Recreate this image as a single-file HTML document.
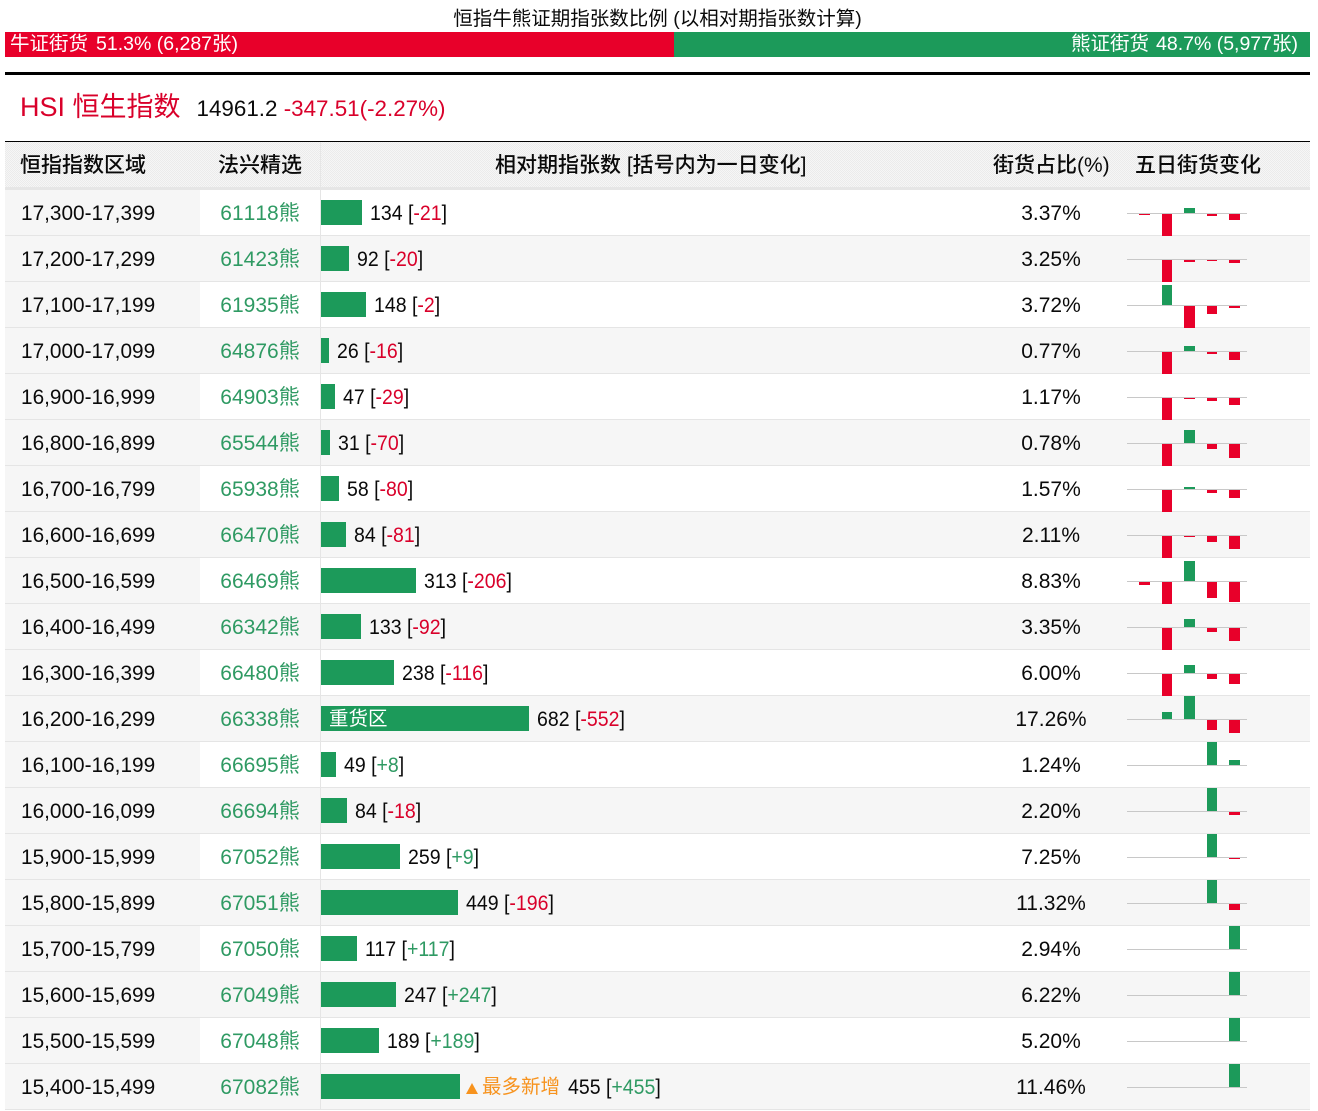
<!DOCTYPE html>
<html lang="zh"><head><meta charset="utf-8"><title>恒指牛熊证</title>
<style>
*{box-sizing:border-box}
html,body{margin:0;padding:0;background:#fff}
body{width:1318px;height:1111px;position:relative;overflow:hidden;font-family:"Liberation Sans","Noto Sans CJK SC",sans-serif;color:#0a0a0a}
.t{position:absolute;left:5px;width:1305px;top:8px;text-align:center;font-size:19.5px;line-height:22px;white-space:nowrap}
.bull,.bear{position:absolute;top:32px;height:25px;color:#fff;font-size:19.5px;line-height:24px;white-space:nowrap}
.bull{left:5px;width:669px;background:#e8002a;padding-left:5px}
.bull span{margin-left:8px}
.bear{left:674px;width:636px;background:#1c9a5a;text-align:right;padding-right:12px}
.bear span{margin-left:7px}
.rule{position:absolute;left:5px;width:1305px;top:72px;height:3px;background:#000}
.h{position:absolute;left:20px;top:87px;line-height:40px;white-space:nowrap;font-size:22.4px}
.h b{font-weight:normal;font-size:27px;color:#d9002a;margin-right:16px}
.h i{font-style:normal;color:#d9002a}
.th{position:absolute;left:5px;width:1305px;top:141px;height:49px;border-top:1px solid #000;border-bottom:3px solid #e6e6e6;background:repeating-conic-gradient(#ebebeb 0 25%,#f6f6f6 0 50%) 0 0/2px 2px;font-size:21px;line-height:47px;font-weight:500}
.th span{position:absolute;top:0;white-space:nowrap}
.th u{position:absolute;left:315px;top:0;width:1px;height:45px;background:#e6e6e6}
.r{position:relative;height:46px;width:1305px;border-bottom:1px solid #e5e5e5;font-size:21px;line-height:47px;white-space:nowrap}
.g{background:#f6f6f6}
.r::before{content:"";position:absolute;left:0;top:0;width:195px;height:45px;background:#f6f6f6}
.r::after{content:"";position:absolute;left:315px;top:0;width:1px;height:46px;background:#e5e5e5}
.r>*{position:absolute}
.a{left:16px;font-size:20.8px;font-kerning:none}
.c{left:195px;width:120px;text-align:center;color:#2f9a63;font-kerning:none}
.p{left:946px;width:200px;text-align:center}
.v{left:316px;top:0;display:flex;align-items:center;height:45px}
.v s{display:block;height:25px;background:#1c9a5a;text-decoration:none;color:#fff;font-size:19.5px;line-height:27px;padding-left:8px;flex:none}
.v em{font-style:normal;margin-left:7.5px;font-size:21px;transform:scaleX(.929);transform-origin:0 50%;position:relative;top:1px}
.re{color:#d9002a}.gr{color:#2f9a63}
.r svg{left:1122px;top:0}
.o{color:#f7931e;font-size:19.5px;margin-left:6px;display:flex;align-items:center;position:relative;top:1px}
.o i{display:block;width:0;height:0;border-left:6px solid transparent;border-right:6px solid transparent;border-bottom:11px solid #f7931e;margin-right:4px;margin-top:1px}
#tb{position:absolute;left:5px;top:190px;width:1305px}
svg .l{fill:#c8c8c8}.n{fill:#e8002a}.u{fill:#1c9a5a}
</style></head><body>
<div class="t">恒指牛熊证期指张数比例 (以相对期指张数计算)</div>
<div class="bull">牛证街货<span>51.3% (6,287张)</span></div>
<div class="bear">熊证街货<span>48.7% (5,977张)</span></div>
<div class="rule"></div>
<div class="h"><b>HSI 恒生指数</b>14961.2 <i>-347.51(-2.27%)</i></div>
<div class="th"><span style="left:15px">恒指指数区域</span><span style="left:213px">法兴精选</span><u></u><span style="left:490px">相对期指张数 [括号内为一日变化]</span><span style="left:988px">街货占比(%)</span><span style="left:1130px">五日街货变化</span></div>
<div id="tb">
<div class="r"><span class="a">17,300-17,399</span><span class="c">61118熊</span><div class="v"><s style="width:41px"></s><em>134 [<span class="re">-21</span>]</em></div><span class="p">3.37%</span><svg width="120" height="46"><rect class="l" y="23" width="120" height="1"/><rect class="n" x="12" y="24" width="11" height="1"/><rect class="n" x="35" y="24" width="10" height="22"/><rect class="u" x="57" y="18" width="11" height="5"/><rect class="n" x="80" y="24" width="10" height="2"/><rect class="n" x="102" y="24" width="11" height="6"/></svg></div>
<div class="r g"><span class="a">17,200-17,299</span><span class="c">61423熊</span><div class="v"><s style="width:28px"></s><em>92 [<span class="re">-20</span>]</em></div><span class="p">3.25%</span><svg width="120" height="46"><rect class="l" y="23" width="120" height="1"/><rect class="n" x="35" y="24" width="10" height="22"/><rect class="n" x="57" y="24" width="11" height="2"/><rect class="n" x="80" y="24" width="10" height="1"/><rect class="n" x="102" y="24" width="11" height="3"/></svg></div>
<div class="r"><span class="a">17,100-17,199</span><span class="c">61935熊</span><div class="v"><s style="width:45px"></s><em>148 [<span class="re">-2</span>]</em></div><span class="p">3.72%</span><svg width="120" height="46"><rect class="l" y="23" width="120" height="1"/><rect class="u" x="35" y="3" width="10" height="20"/><rect class="n" x="57" y="24" width="11" height="22"/><rect class="n" x="80" y="24" width="10" height="8"/><rect class="n" x="102" y="24" width="11" height="2"/></svg></div>
<div class="r g"><span class="a">17,000-17,099</span><span class="c">64876熊</span><div class="v"><s style="width:8px"></s><em>26 [<span class="re">-16</span>]</em></div><span class="p">0.77%</span><svg width="120" height="46"><rect class="l" y="23" width="120" height="1"/><rect class="n" x="35" y="24" width="10" height="22"/><rect class="u" x="57" y="18" width="11" height="5"/><rect class="n" x="80" y="24" width="10" height="2"/><rect class="n" x="102" y="24" width="11" height="8"/></svg></div>
<div class="r"><span class="a">16,900-16,999</span><span class="c">64903熊</span><div class="v"><s style="width:14px"></s><em>47 [<span class="re">-29</span>]</em></div><span class="p">1.17%</span><svg width="120" height="46"><rect class="l" y="23" width="120" height="1"/><rect class="n" x="35" y="24" width="10" height="22"/><rect class="n" x="57" y="24" width="11" height="1"/><rect class="n" x="80" y="24" width="10" height="3"/><rect class="n" x="102" y="24" width="11" height="7"/></svg></div>
<div class="r g"><span class="a">16,800-16,899</span><span class="c">65544熊</span><div class="v"><s style="width:9px"></s><em>31 [<span class="re">-70</span>]</em></div><span class="p">0.78%</span><svg width="120" height="46"><rect class="l" y="23" width="120" height="1"/><rect class="n" x="35" y="24" width="10" height="22"/><rect class="u" x="57" y="10" width="11" height="13"/><rect class="n" x="80" y="24" width="10" height="5"/><rect class="n" x="102" y="24" width="11" height="14"/></svg></div>
<div class="r"><span class="a">16,700-16,799</span><span class="c">65938熊</span><div class="v"><s style="width:18px"></s><em>58 [<span class="re">-80</span>]</em></div><span class="p">1.57%</span><svg width="120" height="46"><rect class="l" y="23" width="120" height="1"/><rect class="n" x="35" y="24" width="10" height="22"/><rect class="u" x="57" y="21" width="11" height="2"/><rect class="n" x="80" y="24" width="10" height="3"/><rect class="n" x="102" y="24" width="11" height="8"/></svg></div>
<div class="r g"><span class="a">16,600-16,699</span><span class="c">66470熊</span><div class="v"><s style="width:25px"></s><em>84 [<span class="re">-81</span>]</em></div><span class="p">2.11%</span><svg width="120" height="46"><rect class="l" y="23" width="120" height="1"/><rect class="n" x="35" y="24" width="10" height="22"/><rect class="n" x="57" y="24" width="11" height="1"/><rect class="n" x="80" y="24" width="10" height="6"/><rect class="n" x="102" y="24" width="11" height="13"/></svg></div>
<div class="r"><span class="a">16,500-16,599</span><span class="c">66469熊</span><div class="v"><s style="width:95px"></s><em>313 [<span class="re">-206</span>]</em></div><span class="p">8.83%</span><svg width="120" height="46"><rect class="l" y="23" width="120" height="1"/><rect class="n" x="12" y="24" width="11" height="3"/><rect class="n" x="35" y="24" width="10" height="22"/><rect class="u" x="57" y="3" width="11" height="20"/><rect class="n" x="80" y="24" width="10" height="16"/><rect class="n" x="102" y="24" width="11" height="20"/></svg></div>
<div class="r g"><span class="a">16,400-16,499</span><span class="c">66342熊</span><div class="v"><s style="width:40px"></s><em>133 [<span class="re">-92</span>]</em></div><span class="p">3.35%</span><svg width="120" height="46"><rect class="l" y="23" width="120" height="1"/><rect class="n" x="35" y="24" width="10" height="22"/><rect class="u" x="57" y="15" width="11" height="8"/><rect class="n" x="80" y="24" width="10" height="4"/><rect class="n" x="102" y="24" width="11" height="13"/></svg></div>
<div class="r"><span class="a">16,300-16,399</span><span class="c">66480熊</span><div class="v"><s style="width:73px"></s><em>238 [<span class="re">-116</span>]</em></div><span class="p">6.00%</span><svg width="120" height="46"><rect class="l" y="23" width="120" height="1"/><rect class="n" x="35" y="24" width="10" height="22"/><rect class="u" x="57" y="15" width="11" height="8"/><rect class="n" x="80" y="24" width="10" height="5"/><rect class="n" x="102" y="24" width="11" height="10"/></svg></div>
<div class="r g"><span class="a">16,200-16,299</span><span class="c">66338熊</span><div class="v"><s style="width:208px">重货区</s><em>682 [<span class="re">-552</span>]</em></div><span class="p">17.26%</span><svg width="120" height="46"><rect class="l" y="23" width="120" height="1"/><rect class="u" x="35" y="16" width="10" height="7"/><rect class="u" x="57" y="0" width="11" height="23"/><rect class="n" x="80" y="24" width="10" height="10"/><rect class="n" x="102" y="24" width="11" height="13"/></svg></div>
<div class="r"><span class="a">16,100-16,199</span><span class="c">66695熊</span><div class="v"><s style="width:15px"></s><em>49 [<span class="gr">+8</span>]</em></div><span class="p">1.24%</span><svg width="120" height="46"><rect class="l" y="23" width="120" height="1"/><rect class="u" x="80" y="0" width="10" height="23"/><rect class="u" x="102" y="18" width="11" height="5"/></svg></div>
<div class="r g"><span class="a">16,000-16,099</span><span class="c">66694熊</span><div class="v"><s style="width:26px"></s><em>84 [<span class="re">-18</span>]</em></div><span class="p">2.20%</span><svg width="120" height="46"><rect class="l" y="23" width="120" height="1"/><rect class="u" x="80" y="0" width="10" height="23"/><rect class="n" x="102" y="24" width="11" height="3"/></svg></div>
<div class="r"><span class="a">15,900-15,999</span><span class="c">67052熊</span><div class="v"><s style="width:79px"></s><em>259 [<span class="gr">+9</span>]</em></div><span class="p">7.25%</span><svg width="120" height="46"><rect class="l" y="23" width="120" height="1"/><rect class="u" x="80" y="0" width="10" height="23"/><rect class="n" x="102" y="24" width="11" height="1"/></svg></div>
<div class="r g"><span class="a">15,800-15,899</span><span class="c">67051熊</span><div class="v"><s style="width:137px"></s><em>449 [<span class="re">-196</span>]</em></div><span class="p">11.32%</span><svg width="120" height="46"><rect class="l" y="23" width="120" height="1"/><rect class="u" x="80" y="0" width="10" height="23"/><rect class="n" x="102" y="24" width="11" height="6"/></svg></div>
<div class="r"><span class="a">15,700-15,799</span><span class="c">67050熊</span><div class="v"><s style="width:36px"></s><em>117 [<span class="gr">+117</span>]</em></div><span class="p">2.94%</span><svg width="120" height="46"><rect class="l" y="23" width="120" height="1"/><rect class="u" x="102" y="0" width="11" height="23"/></svg></div>
<div class="r g"><span class="a">15,600-15,699</span><span class="c">67049熊</span><div class="v"><s style="width:75px"></s><em>247 [<span class="gr">+247</span>]</em></div><span class="p">6.22%</span><svg width="120" height="46"><rect class="l" y="23" width="120" height="1"/><rect class="u" x="102" y="0" width="11" height="23"/></svg></div>
<div class="r"><span class="a">15,500-15,599</span><span class="c">67048熊</span><div class="v"><s style="width:58px"></s><em>189 [<span class="gr">+189</span>]</em></div><span class="p">5.20%</span><svg width="120" height="46"><rect class="l" y="23" width="120" height="1"/><rect class="u" x="102" y="0" width="11" height="23"/></svg></div>
<div class="r g"><span class="a">15,400-15,499</span><span class="c">67082熊</span><div class="v"><s style="width:139px"></s><span class="o"><i></i>最多新增</span><em>455 [<span class="gr">+455</span>]</em></div><span class="p">11.46%</span><svg width="120" height="46"><rect class="l" y="23" width="120" height="1"/><rect class="u" x="102" y="0" width="11" height="23"/></svg></div>
</div>
</body></html>
